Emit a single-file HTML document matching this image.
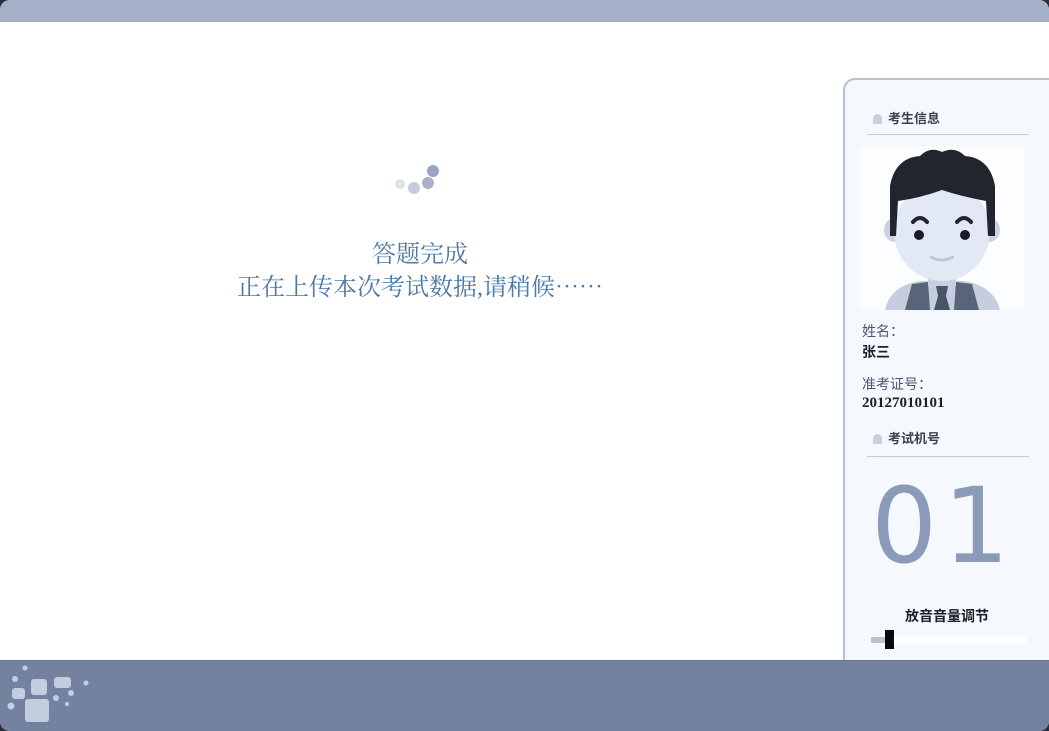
<!DOCTYPE html>
<html><head><meta charset="utf-8"><style>
html,body{margin:0;padding:0;width:1049px;height:731px;overflow:hidden;background:#2a2e3a;font-family:"Liberation Sans","Noto Sans CJK SC",sans-serif}
#win{position:absolute;left:0;top:0;width:1049px;height:731px;background:#fff;border-radius:10px;overflow:hidden}
#top{position:absolute;left:0;top:0;width:1049px;height:22px;background:#a3b0c8}
#bot{position:absolute;left:0;top:660px;width:1049px;height:71px;background:#7482a0;border-top:1px solid #6a7892}
#panel{position:absolute;left:843px;top:78px;width:210px;height:590px;background:#f5f9fd;border:2px solid #b4c0d4;border-radius:12px 0 0 0;box-sizing:border-box}
.h{position:absolute;left:22px;width:162px;height:30px;border-bottom:1px solid #c4ccd8;font-size:13px;font-weight:bold;color:#3a4050}
.h i{display:inline-block;width:9px;height:10px;background:#c8d0dc;border-radius:5px 5px 2px 2px;margin:0 6px 0 6px;vertical-align:-1px}
.lab{position:absolute;left:17px;font-size:14px;color:#4a5670}
.val{position:absolute;left:17px;font-size:14px;font-weight:bold;color:#1a1e28}
.msg{position:absolute;left:0;width:840px;text-align:center;font-family:"Liberation Serif","Noto Serif CJK SC",serif;font-size:24px;color:#4a78a8;white-space:nowrap}
.msg span{font-family:"Noto Serif CJK SC",serif}
</style></head><body><div id="win">
<div id="top"></div>
<svg style="position:absolute;left:390px;top:160px" width="60" height="40">
<circle cx="43" cy="11" r="6" fill="#9aa6c0"/><circle cx="38" cy="23" r="6" fill="#a8b2c8"/><circle cx="24" cy="28" r="6" fill="#c4cce0"/><circle cx="10" cy="24" r="5" fill="#dde3ee"/>
</svg>
<div class="msg" style="top:234px">答题完成</div>
<div class="msg" style="top:267px">正在上传本次考试数据,请稍候<span>……</span></div>
<div id="panel">
<div class="h" style="top:24px;line-height:30px"><i></i>考生信息</div>
<svg style="position:absolute;left:15px;top:66px" width="164" height="164" viewBox="0 0 164 164">
<rect width="164" height="164" fill="#fcfdfe"/>
<path d="M25 164 Q30 140 60 135 L104 135 Q134 140 140 164Z" fill="#c4cede"/>
<path d="M45 164 L52 138 L68 136 L70 164Z M119 164 L112 138 L96 136 L94 164Z" fill="#5a6478"/>
<path d="M76 140 L88 140 L86 150 L90 164 L74 164 L78 150Z" fill="#4a5468"/>
<rect x="68" y="118" width="28" height="22" fill="#c6d0e2"/>
<ellipse cx="35" cy="84" rx="11" ry="12" fill="#c8d2e4"/><ellipse cx="129" cy="84" rx="11" ry="12" fill="#c8d2e4"/>
<ellipse cx="82" cy="85" rx="48" ry="50" fill="#e2e9f4"/>
<path d="M30 90 L30 40 Q35 12 60 10 Q70 0 82 6 Q95 0 105 10 Q130 12 135 40 L135 90 L128 90 L126 55 Q100 50 82 44 Q60 52 38 55 L36 90Z" fill="#22252e"/>
<path d="M53 76 Q60 68 67 76 M97 76 Q104 68 111 76" stroke="#22252e" stroke-width="4" fill="none" stroke-linecap="round"/>
<circle cx="59" cy="89" r="5" fill="#1a1c24"/><circle cx="105" cy="89" r="5" fill="#1a1c24"/>
<path d="M71 111 Q82 117 93 111" stroke="#b8c4d8" stroke-width="2.5" fill="none" stroke-linecap="round"/>
</svg>
<div class="lab" style="top:241px">姓名：</div>
<div class="val" style="top:262px">张三</div>
<div class="lab" style="top:294px">准考证号：</div>
<div class="val" style="top:315px;font-family:'Liberation Serif',serif;font-size:15px">20127010101</div>
<div class="h" style="top:344px;line-height:30px;height:32px"><i></i>考试机号</div>
<div style="position:absolute;left:26px;top:394px;font-size:104px;line-height:104px;letter-spacing:6px;color:#8a9ab8;font-family:'DejaVu Sans',sans-serif">01</div>
<div style="position:absolute;left:60px;top:526px;font-size:14px;font-weight:bold;color:#1a1e28">放音音量调节</div>
<div style="position:absolute;left:26px;top:556px;width:156px;height:8px;background:#fff"></div>
<div style="position:absolute;left:26px;top:557px;width:16px;height:6px;background:#b8c2d4"></div>
<div style="position:absolute;left:40px;top:550px;width:9px;height:19px;background:#0a0a0a"></div>
</div>
<div id="bot">
<svg width="110" height="70" style="position:absolute;left:0;top:0">
<g fill="#c2cde0">
<rect x="31" y="18" width="16" height="16" rx="3"/><rect x="54" y="16" width="17" height="11" rx="3"/><rect x="12" y="27" width="13" height="11" rx="3"/><rect x="25" y="38" width="24" height="23" rx="3"/>
<circle cx="25" cy="7" r="2.5"/><circle cx="15" cy="18" r="3"/><circle cx="86" cy="22" r="2.5"/><circle cx="71" cy="32" r="3"/><circle cx="56" cy="37" r="3"/><circle cx="67" cy="43" r="2"/><circle cx="11" cy="45" r="3.5"/>
</g></svg>
</div>
</div></body></html>
